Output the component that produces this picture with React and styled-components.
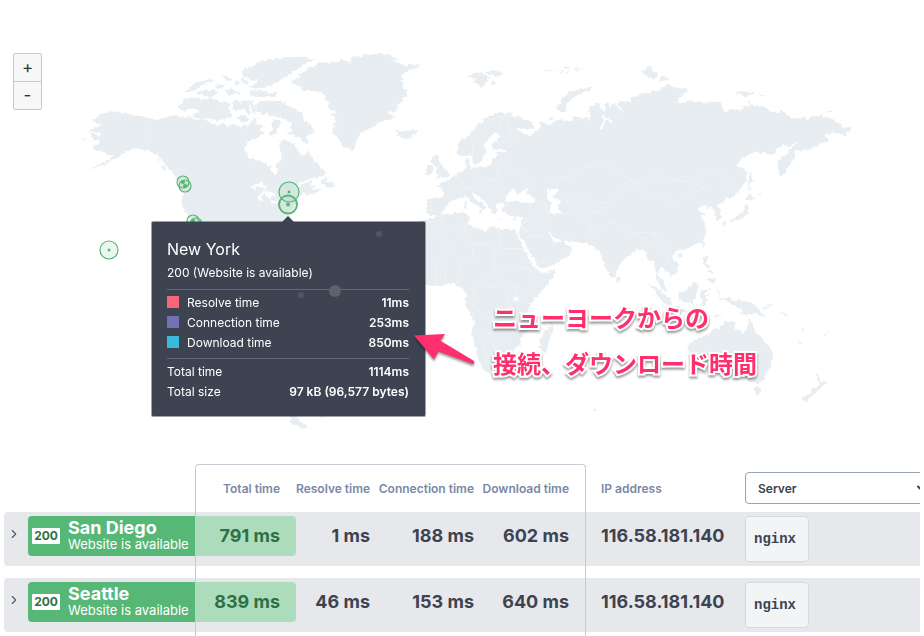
import React, { useState } from 'react';
import styled, { createGlobalStyle } from 'styled-components';
import { ChevronDown, ChevronRight } from 'lucide-react';

const GlobalStyle = createGlobalStyle`
  * {
    box-sizing: border-box;
  }
  body {
    margin: 0;
    background: #fff;
    color: #3d4351;
    font-family: Inter, "Noto Sans CJK JP", sans-serif;
    font-size: 12px;
  }
`;

const Page = styled.main`
  padding: 0 4px;
`;

const MapPanel = styled.section`
  position: relative;
  margin: 0 -4px;
`;

const MapSvg = styled.svg`
  display: block;
  width: 100%;
  height: auto;
`;

const ZoomControls = styled.div`
  position: absolute;
  top: 53px;
  left: 13px;
  display: flex;
  flex-direction: column;
  width: 29px;
  border: 1px solid #c8c8c8;
  border-radius: 2px;
  background: #f7f7f7;
`;

const ZoomButton = styled.button`
  height: 27px;
  padding: 0;
  border: 0;
  background: none;
  color: #333;
  font: 400 17px/27px Inter, sans-serif;
  cursor: pointer;

  & + & {
    height: 28px;
    border-top: 1px solid #c8c8c8;
  }
`;

const Tooltip = styled.div`
  position: absolute;
  top: 222px;
  left: 152px;
  width: 273px;
  padding: 15px 16px 9px 15px;
  border-radius: 1px;
  background: #3d4351;
  color: #fff;
  box-shadow: 0 0 0 1px rgba(61, 67, 81, 0.5);

  &::before {
    content: '';
    position: absolute;
    top: -6px;
    left: 130px;
    border: 6px solid transparent;
    border-top: 0;
    border-bottom-color: #3d4351;
  }
`;

const TooltipDots = styled.svg`
  position: absolute;
  inset: 0;
  width: 100%;
  height: 100%;
`;

const TooltipTitle = styled.h2`
  margin: 0;
  font-size: 16px;
  font-weight: 400;
  line-height: 25px;
`;

const TooltipStatus = styled.p`
  margin: 0;
  padding-bottom: 5px;
  font-size: 12px;
  line-height: 22px;
`;

const Metrics = styled.dl`
  margin: 0;
  padding: 2px 0 6px;
  border-top: 1px solid #606a78;
`;

const Metric = styled.div`
  display: flex;
  align-items: center;
  height: 20px;

  dt {
    flex: 1;
  }
  dd {
    margin: 0;
    font-weight: 600;
  }
`;

const Swatch = styled.span`
  width: 12px;
  height: 12px;
  margin-right: 8px;
  background: ${(props) => props.$color};
`;

const Arrow = styled.svg`
  position: absolute;
  top: 326px;
  left: 408px;
  width: 72px;
  height: 46px;
  filter: drop-shadow(0 2px 1px rgba(0, 0, 0, 0.4));
`;

const Note = styled.p`
  position: absolute;
  top: 294px;
  left: 493px;
  margin: 0;
  color: #ff2e6c;
  font: 700 24px/46px "Noto Sans CJK JP", sans-serif;
  white-space: nowrap;
  paint-order: stroke fill;
  -webkit-text-stroke: 4px #fff;
  filter: drop-shadow(0 2px 1px rgba(0, 0, 0, 0.4));
`;

const Results = styled.section`
  position: relative;
  overflow: hidden;
`;

const TimingFrame = styled.div`
  position: absolute;
  top: 0;
  bottom: 0;
  left: 191px;
  width: 391px;
  border: 1px solid #c5cad4;
  border-bottom: 0;
  border-radius: 4px 4px 0 0;
  pointer-events: none;
`;

const Table = styled.table`
  width: 100%;
  table-layout: fixed;
  border-collapse: separate;
  border-spacing: 0;
`;

const Col = styled.col`
  width: ${(props) => props.$width};
`;

const Head = styled.th`
  height: 48px;
  padding: 0 ${(props) => props.$right || '0'} 0 ${(props) => props.$left || '0'};
  color: #7b88a3;
  font-size: 12px;
  font-weight: 600;
  text-align: ${(props) => props.$align || 'right'};
  white-space: nowrap;
`;

const Group = styled.tbody`
  &::after {
    content: '';
    display: table-row;
    height: 12px;
  }
`;

const Cell = styled.td`
  height: 54px;
  padding: 4px 0;
  background: #e7e8ec;
  vertical-align: top;

  &:first-child {
    border-radius: 4px 0 0 4px;
  }
`;

const Expand = styled.button`
  display: flex;
  align-items: center;
  justify-content: center;
  width: 20px;
  height: 36px;
  padding: 0;
  border: 0;
  background: none;
  color: #555b68;
  cursor: pointer;
`;

const Location = styled.div`
  display: flex;
  align-items: center;
  gap: 8px;
  height: 40px;
  padding-left: 4px;
  border-radius: 4px 0 0 4px;
  background: #57b777;
  color: #fff;
  white-space: nowrap;
`;

const Code = styled.span`
  width: 28px;
  border-radius: 1px;
  background: #fff;
  color: #2d7045;
  font-size: 12px;
  font-weight: 700;
  line-height: 16px;
  text-align: center;
`;

const Place = styled.div`
  padding-bottom: 3px;
`;

const City = styled.div`
  font-size: 18px;
  font-weight: 700;
  line-height: 20px;
`;

const Status = styled.div`
  font-size: 13px;
  line-height: 13px;
`;

const Value = styled.div`
  height: 40px;
  padding: 0 ${(props) => props.$right || '8px'} 0 ${(props) => props.$left || '0'};
  border-radius: 0 4px 4px 0;
  background: ${(props) => (props.$total ? '#addcbd' : 'none')};
  color: ${(props) => (props.$total ? '#2d7045' : '#3d4351')};
  font-size: 18px;
  font-weight: 700;
  line-height: 40px;
  text-align: ${(props) => props.$align || 'right'};
  white-space: nowrap;
`;

const ServerValue = styled.code`
  display: inline-block;
  padding: 0 12px 0 8px;
  border: 1px solid #d6d8dc;
  border-radius: 4px;
  background: #f3f4f6;
  color: #3d4351;
  font: 700 14px/44px "Liberation Mono", monospace;
  vertical-align: top;
`;

const SelectBox = styled.label`
  position: relative;
  display: block;
  width: 190px;

  svg {
    position: absolute;
    top: 10px;
    right: 8px;
    color: #3d4351;
    pointer-events: none;
  }
`;

const Select = styled.select`
  display: block;
  width: 100%;
  height: 32px;
  padding: 0 12px;
  border: 1px solid #98a3b3;
  border-radius: 4px;
  background: #fff;
  color: #3d4351;
  font: 600 12px Inter, sans-serif;
  appearance: none;
`;

// Land outlines are stored at three units per map pixel, grouped by origin.
const land = [
  {
    x: 0,
    y: 40,
    paths: [
      'M265 273L288 260L306 255L290 249L274 241L292 230L300 223L320 219L338 213L358 218L378 217L400 226L440 232L468 240L500 232L522 225L545 233L562 228L590 240L606 238L620 242L632 250L655 258L674 248L682 262L700 254L722 262L735 254L742 264L752 245L762 232L774 240L764 250L780 258L793 256L781 270L794 279L774 292L757 297L740 309L733 330L745 350L762 359L786 362L802 374L812 378L815 392L828 408L833 390L826 376L843 362L848 345L839 327L842 305L856 299L872 307L885 312L892 330L906 347L918 341L925 332L932 350L944 363L962 380L982 399L968 408L945 414L920 419L897 430L884 444L901 438L922 424L936 422L928 437L950 440L931 449L960 443L953 456L922 467L916 459L901 468L890 472L893 483L877 506L866 516L873 530L857 545L840 565H600L580 540L562 525L548 501L545 482L550 447L535 430L525 410L519 397L502 380L491 367L478 350L462 340L440 331L407 325L394 326L380 334L365 345L343 358L314 374L272 389L258 396L286 380L320 365L343 345L326 347L305 333L289 332L278 325L291 312L303 304L282 299L268 280L288 283L301 288L297 278Z',
      'M552 178L570 174L592 173L617 178L635 172L652 181L668 195L690 211L697 229L675 239L646 240L625 235L605 238L592 232L577 229L580 220L600 217L590 207L570 209L549 213L534 205L542 196Z',
      'M552 154L570 143L580 130L602 124L634 117L637 125L610 133L596 143L579 150L565 157ZM592 157L618 148L624 154L645 151L655 163L637 169L600 166ZM666 108L686 110L697 120L682 124ZM639 136L660 132L674 140L655 145ZM673 148L696 145L703 160L687 168ZM698 126L715 122L717 132L705 135ZM704 151L720 154L724 165L706 160ZM661 192L676 184L690 189L688 205L673 208ZM700 186L712 180L722 192L724 208L708 214L698 202ZM727 178L753 183L748 200L755 219L742 225L733 207L720 206ZM753 183L761 178L760 190L768 210L761 225L754 207ZM712 232L735 224L751 238L738 247L724 245ZM484 380L490 378L502 392L496 394ZM470 352L476 354L484 368L478 364Z',
      'M765 194L778 184L810 182L842 183L852 190L872 200L895 212L909 223L906 239L924 252L948 270L939 273L944 282L926 281L920 294L926 312L910 305L899 295L887 293L874 283L858 283L868 276L881 274L873 263L876 250L858 240L838 228L820 231L802 222L784 226L778 217L767 207Z',
      'M818 240L836 240L842 252L832 264L826 284L811 288L802 278L821 270L815 257Z',
      'M724 96L736 85L754 80L774 67L800 61L833 57L872 52L901 50L928 56L948 62L927 66L910 76L894 86L881 92L869 105L850 115L832 126L812 137L786 145L760 146L747 138L766 132L778 121L757 122L740 113L726 107ZM747 153L766 149L784 152L804 158L829 155L831 166L809 171L775 170L752 168ZM721 115L740 118L751 127L733 133Z',
      'M960 430L969 420L976 408L981 414L978 425L992 427L1002 433L1000 444L991 440L980 442ZM243 295L257 297L255 302Z'
    ]
  },
  {
    x: 220,
    y: 40,
    paths: [
      'M213 122L240 113L237 103L258 96L260 86L286 77L292 68L318 65L348 70L367 60L392 65L390 55L430 46L468 42L505 44L538 54L527 61L507 66L542 69L552 79L572 74L602 73L595 81L579 86L559 97L545 108L557 119L540 122L555 134L545 144L559 151L562 168L543 177L550 187L527 194L540 202L531 209L501 220L531 230L510 239L489 243L466 252L452 267L426 276L418 287L410 300L402 329L395 333L386 325L372 322L358 304L350 290L338 276L337 266L350 259L334 256L350 247L340 240L352 235L329 226L348 220L345 209L327 206L326 188L316 179L315 165L300 155L275 153L243 153L248 143L219 130Z',
      'M525 273L536 267L544 275L555 273L572 267L583 270L592 280L578 288L557 298L535 291L542 286L528 284L540 279Z'
    ]
  },
  {
    x: 420,
    y: 40,
    paths: [
      'M111 315L125 300L140 291L153 277L166 265L174 248L187 246L192 236L208 230L224 222L246 215L257 221L275 219L274 227L300 232L325 242L341 253L342 264L325 270L308 267L288 263L300 274L306 281L333 285L347 272L360 268L357 244L372 246L377 258L405 246L425 238L444 244L463 241L455 228L480 235L501 235L516 244L507 230L511 221L504 207L514 195L528 188L541 194L539 207L553 217L546 232L553 243L535 269L552 261L556 239L576 246L570 236L554 235L552 218L559 210L552 195L563 185L568 200L583 192L596 208L612 221L608 207L590 193L596 183L628 184L632 174L660 164L690 155L723 148L730 139L744 131L760 142L800 146L803 158L779 168L777 178L762 188L790 185L830 184L859 192L868 184L900 187L904 204L917 218L928 208L970 210L971 197L996 196L1034 201L1055 215L1097 216L1105 232L1153 233L1160 240L1169 240L1173 227L1209 228L1238 237L1261 252L1268 263L1287 262L1292 270L1280 276L1274 289L1256 279L1235 274L1231 282L1210 284L1222 290L1226 304L1204 310L1166 329L1127 332L1122 342L1121 364L1108 371L1102 390L1080 412L1075 394L1073 366L1087 352L1122 319L1130 306L1114 315L1104 325L1102 313L1089 314L1069 328L1068 337L1045 342L1010 337L990 340L967 358L946 377L969 385L980 393L979 420L966 441L945 466L926 478L919 470L908 487L889 496L903 513L906 532L890 541L884 519L875 500L856 506L859 493L846 500L831 511L858 520L842 529L856 551L858 579L848 604L819 619L794 630L775 629L763 637L756 652L776 675L777 695L752 712L744 698L724 680L714 688L715 709L730 724L741 756L724 746L708 715L708 690L698 661L685 665L677 637L667 625L645 633L620 654L593 680L590 705L575 718L560 687L545 654L541 632L527 632L514 615L481 606L442 605L415 596L398 588L386 570L389 585L403 605L412 610L427 600L440 615L459 625L444 648L401 674L360 688L345 662L321 622L295 580L301 561L307 529L286 531L267 526L247 517L246 501L264 491L233 490L227 499L231 519L218 524L211 504L194 486L172 466L158 456L160 471L188 491L199 498L187 510L176 498L154 486L142 468L120 473L91 484L73 506L60 526L36 529L20 520L22 473L70 473L69 448L48 434L78 426L107 407L121 393L141 385L136 366L145 354L151 371L154 384L180 380L212 378L216 356L234 346L225 336L253 336L264 329L217 329L215 311L235 294L239 280L216 282L207 298L190 316L198 332L189 348L184 366L170 375L159 368L156 349L143 347L121 349L111 338Z',
      'M34 351L47 344L58 347L55 362L68 375L73 389L88 399L85 412L66 411L46 416L57 406L49 398L53 385L43 376L35 367ZM14 387L24 375L39 376L39 400L16 408L22 397ZM133 483L139 481L137 494L140 506L132 505ZM176 513L187 511L184 518ZM227 534L249 535L236 538ZM275 535L293 530L284 539Z',
      'M148 103L176 99L183 96L202 108L215 111L202 117L194 135L181 144L177 133L156 124L174 117L148 113ZM196 97L220 92L250 96L248 102L227 109ZM211 124L222 121L232 132L217 135ZM368 87L383 91L402 89L400 94L378 93ZM414 93L429 92L429 96ZM428 85L447 74L451 84L439 87ZM458 88L474 83L470 92ZM475 87L495 82L482 89ZM433 94L453 96L443 98Z',
      'M409 210L418 194L426 177L447 156L476 149L514 141L517 149L475 162L458 176L441 190L436 203L444 215L429 217ZM386 236L399 235L397 242L386 240ZM665 98L680 82L698 82L699 95L716 99L714 113L699 116L681 107ZM714 124L728 108L753 119L735 121ZM945 159L965 152L982 157L1005 159L991 165L969 171L958 162ZM1012 162L1042 166L1025 168ZM975 182L993 184L989 189ZM1221 214L1237 209L1243 214L1224 217Z',
      'M983 391L993 395L998 426L990 428L992 446L986 448L984 423L989 417ZM985 460L1001 470L1007 473L991 483L977 478L983 470ZM976 494L985 492L983 515L972 527L958 538L939 545L927 543L954 530L969 516ZM908 547L919 547L918 560L910 561ZM925 542L937 540L934 547ZM1011 466L1028 459L1018 467Z',
      'M0 544L34 536L60 524L100 520L139 519L150 535L145 551L183 572L198 572L206 558L245 566L270 570L286 568L301 606L319 641L339 674L355 691L362 700L406 691L397 714L374 745L344 774L329 797L325 815L335 837L333 865L302 894L302 915L281 926L264 958L240 982L211 996L197 1000L174 956L168 925L154 882L162 845L152 826L138 800L134 778L139 766L130 745L111 739L101 730L62 735L28 739L0 728Z',
      'M397 844L400 862L389 904L377 935L365 937L356 924L362 909L358 899L375 876L386 867ZM589 707L601 717L597 730L590 727ZM780 642L787 637L787 647L779 653L773 647ZM848 607L856 605L850 626L845 618ZM850 651L862 650L860 671L873 684L862 683L847 671ZM858 692L868 696L874 689L881 700L873 702ZM859 718L884 710L888 719L882 731L870 727Z'
    ]
  },
  {
    x: 630,
    y: 200,
    paths: [
      'M56 252L79 262L94 275L106 285L121 300L127 317L112 318L92 300L80 280ZM128 320L147 321L171 330L199 339L236 347L208 346L174 340L137 332ZM145 278L165 274L190 249L197 246L209 260L200 273L200 286L185 312L162 304L148 301ZM211 273L220 269L247 267L220 280L221 287L238 283L230 290L235 306L226 302L221 322L213 322L217 302L211 298ZM252 345L281 342L260 352Z',
      'M281 291L297 292L308 304L330 298L364 307L381 318L390 335L412 351L394 350L371 337L363 345L348 346L332 339L335 326L313 319L297 309L286 304ZM397 322L417 315L423 309L425 317L404 327ZM449 337L473 346L475 351L456 342ZM514 380L523 387L522 396ZM498 419L516 431L511 433ZM580 404L590 399L585 406ZM589 399L596 394L593 400ZM261 268L270 276L265 286ZM266 292L285 294L275 299Z',
      'M174 432L207 414L223 408L242 398L248 387L268 385L286 365L319 366L310 380L344 402L352 380L358 353L369 374L371 394L388 404L406 428L423 444L430 471L420 501L407 525L404 539L382 549L343 540L334 523L319 516L310 500L270 503L243 518L199 522L184 514L190 491L177 465Z',
      'M372 562L397 564L395 574L385 586L377 582ZM555 520L566 528L572 542L589 545L579 558L566 570L558 564L568 550L563 533ZM552 562L561 568L558 579L536 595L530 607L514 602L521 591L542 577Z'
    ]
  },
  { x: 145, y: 170, paths: ['M430 735L448 733L468 755L490 772L474 776L449 763L431 757L438 748ZM521 739L535 738L529 742Z'] },
  { x: 420, y: 200, paths: ['M518 627L528 627L527 633L518 632Z'] }
];

const water = [
  { x: 0, y: 40, d: 'M748 443L768 432L787 430L800 438L797 447L778 440L763 447ZM779 458L790 454L796 456L785 467L787 481L780 485L776 474ZM795 453L808 455L821 456L827 466L814 468L806 478L799 465ZM812 486L840 477L832 489L815 491ZM838 472L856 466L850 476Z' },
  { x: 420, y: 40, d: 'M258 486L259 469L272 450L288 450L289 461L309 459L302 451L327 444L319 457L340 472L346 486L324 490L300 482L278 484ZM378 457L391 446L416 447L413 459L398 467L409 479L419 479L421 491L415 501L422 522L399 521L389 513L395 491L382 476ZM456 458L462 455L461 464ZM281 773L292 767L297 775L286 785Z' }
];

const borders = [
  'M157 352L158 318L166 301L188 267L214 237L246 229L276 225M238 282L240 250L246 231M275 226L265 244L278 308L263 327M250 338L257 356L267 371L276 394L308 410L334 426L329 446M231 368L252 376L276 394M172 382L177 415L218 423L232 404L230 374M119 398L119 421L130 437L159 441L177 416M131 444L157 447L190 443L215 434M190 448L204 472L226 478L241 476M217 423L234 424L250 443L263 448M78 425L98 435L121 442L116 466M22 485L36 488L32 524M376 434L389 415L427 412L462 407L475 388L515 378L550 377L579 386L613 410L642 426L616 431L605 444L589 469L580 483L550 489L518 487L491 474L461 469L438 483L438 463',
  'M641 427L672 419L706 404L740 417L780 423L823 423L846 428L834 438L855 443L823 456L778 480L746 485L704 466L670 457L642 427M823 423L846 392L876 390L913 412L937 433L914 466L890 489',
  'M345 486L370 491L390 500M371 488L383 523L398 531M301 560L331 526L366 520L384 543L398 578M423 524L452 515L492 530L512 554L510 592M461 480L478 505L494 523L534 516L552 512L580 550M518 489L538 500L556 516M580 543L611 570L643 580L675 577L705 580L700 612L728 619L754 628M510 607L536 577L560 552L581 549M640 584L669 596L680 588M679 593L685 620M698 577L711 594L724 620L737 630L753 681',
  'M21 547L61 540L65 552L28 587L0 609M60 524L75 555L130 586L143 538M130 545L139 584L158 611L223 616L225 680L198 718L163 745L138 748M237 565L240 625L340 626M158 611L157 652L124 670L110 733M38 571L98 625L72 656L44 684L47 735M224 680L270 690L321 680L362 724L328 760L289 737L257 730L224 681M163 745L161 805L215 834L216 878L176 885M203 744L253 737L267 768L265 816L216 831M289 738L292 766L330 789M267 787L290 827L328 821M216 878L252 868L276 879L293 852L281 832M173 885L195 925L201 973M202 905L230 920L267 893M227 918L234 943L262 954M45 679L75 683L77 733M302 650L332 669L350 693M381 691L398 711L362 725M445 595L460 620L415 659L361 671M386 594L342 586L301 563M302 562L326 570L347 542L387 567M320 572L319 593L345 587'
];

const pins = [
  { x: 183, y: 182, r: 6, dot: 2 },
  { x: 185, y: 186, r: 6, dot: 2 },
  { x: 193, y: 221, r: 6, dot: 2 },
  { x: 196, y: 224, r: 6, dot: 2 },
  { x: 289, y: 192, r: 10, dot: 1.5 },
  { x: 109, y: 250, r: 9, dot: 1.5 },
  { x: 288, y: 204.5, r: 9, dot: 2, active: true }
];

const metrics = [
  { label: 'Resolve time', value: '11ms', color: '#f56777' },
  { label: 'Connection time', value: '253ms', color: '#7272b8' },
  { label: 'Download time', value: '850ms', color: '#39bad8' }
];

const totals = [
  { label: 'Total time', value: '1114ms' },
  { label: 'Total size', value: '97 kB (96,577 bytes)' }
];

const results = [
  { city: 'San Diego', total: 791, resolve: 1, connection: 188, download: 602 },
  { city: 'Seattle', total: 839, resolve: 46, connection: 153, download: 640 }
];

const place = (x, y) => `translate(${x} ${y}) scale(0.33333)`;

const WorldMap = () => (
  <MapSvg viewBox="0 0 924 464" role="img" aria-label="World map">
    <defs>
      <filter id="coast" x="0" y="0" width="924" height="464" filterUnits="userSpaceOnUse">
        <feTurbulence type="fractalNoise" baseFrequency="0.25" numOctaves="2" seed="4" />
        <feDisplacementMap in="SourceGraphic" scale="5" xChannelSelector="R" yChannelSelector="G" />
      </filter>
    </defs>
    <g filter="url(#coast)" colorInterpolationFilters="sRGB">
      {land.map((group) => (
        <g key={`${group.x}-${group.y}`} transform={place(group.x, group.y)} fill="#e8edf1">
          {group.paths.map((d) => <path key={d} d={d} />)}
        </g>
      ))}
      {water.map((w) => <path key={w.d} d={w.d} transform={place(w.x, w.y)} fill="#fff" />)}
    </g>
    {borders.map((d) => (
      <path
        key={d}
        d={d}
        transform={place(420, 40)}
        fill="none"
        stroke="#f1f4f6"
        strokeWidth="2"
        strokeLinejoin="round"
      />
    ))}
    <path d="M146 117V150M746 300V315" stroke="#f1f4f6" strokeWidth="0.7" />
    {pins.map((pin) => (
      <g key={`${pin.x}-${pin.y}`}>
        <circle
          cx={pin.x}
          cy={pin.y}
          r={pin.r}
          fill="#57b777"
          fillOpacity="0.12"
          stroke="#57b777"
          strokeWidth={pin.active ? 2 : 1.2}
        />
        <circle cx={pin.x} cy={pin.y} r={pin.dot} fill="#57b777" />
      </g>
    ))}
  </MapSvg>
);

const MetricRow = ({ metric }) => (
  <Metric>
    {metric.color && <Swatch $color={metric.color} />}
    <dt>{metric.label}</dt>
    <dd>{metric.value}</dd>
  </Metric>
);

const ResultRow = ({ result }) => {
  const [open, setOpen] = useState(false);
  return (
    <Group>
      <tr>
        <Cell>
          <Expand aria-label={`Show ${result.city}`} aria-expanded={open} onClick={() => setOpen(!open)}>
            <ChevronRight size={14} />
          </Expand>
        </Cell>
        <Cell>
          <Location>
            <Code>200</Code>
            <Place>
              <City>{result.city}</City>
              <Status>Website is available</Status>
            </Place>
          </Location>
        </Cell>
        <Cell><Value $total $right="16px">{result.total} ms</Value></Cell>
        <Cell><Value>{result.resolve} ms</Value></Cell>
        <Cell><Value>{result.connection} ms</Value></Cell>
        <Cell><Value $right="16px">{result.download} ms</Value></Cell>
        <Cell><Value $align="left" $left="16px">116.58.181.140</Value></Cell>
        <Cell><ServerValue>nginx</ServerValue></Cell>
      </tr>
    </Group>
  );
};

const App = () => (
  <Page>
    <GlobalStyle />
    <MapPanel>
      <WorldMap />
      <ZoomControls>
        <ZoomButton aria-label="Zoom in">+</ZoomButton>
        <ZoomButton aria-label="Zoom out">-</ZoomButton>
      </ZoomControls>
      <Tooltip>
        <TooltipDots aria-hidden="true">
          <circle cx="227" cy="12" r="3" fill="#505663" />
          <circle cx="183" cy="69" r="6" fill="#5c626e" />
          <circle cx="149" cy="73" r="3" fill="#505663" />
        </TooltipDots>
        <TooltipTitle>New York</TooltipTitle>
        <TooltipStatus>200 (Website is available)</TooltipStatus>
        <Metrics>
          {metrics.map((metric) => <MetricRow key={metric.label} metric={metric} />)}
        </Metrics>
        <Metrics>
          {totals.map((metric) => <MetricRow key={metric.label} metric={metric} />)}
        </Metrics>
      </Tooltip>
      <Arrow viewBox="408 326 72 46" aria-hidden="true">
        <path d="M414 335.6L445 334L440.5 340.8L474 361Q475 364 472.5 364L438.5 351.6L434 359.5Z" fill="#ff2e6c" />
      </Arrow>
      <Note>
        ニューヨークからの
        <br />
        接続、ダウンロード時間
      </Note>
    </MapPanel>
    <Results>
      <Table>
        <colgroup>
          <Col $width="24px" />
          <Col $width="167px" />
          <Col $width="101px" />
          <Col $width="82px" />
          <Col $width="104px" />
          <Col $width="103px" />
          <Col $width="160px" />
          <Col />
        </colgroup>
        <thead>
          <tr>
            <Head colSpan={2} />
            <Head $right="16px">Total time</Head>
            <Head $right="8px">Resolve time</Head>
            <Head $right="8px">Connection time</Head>
            <Head $right="16px">Download time</Head>
            <Head $align="left" $left="16px">IP address</Head>
            <Head $align="left">
              <SelectBox>
                <Select aria-label="Response header" defaultValue="Server">
                  <option>Server</option>
                </Select>
                <ChevronDown size={12} strokeWidth={4} />
              </SelectBox>
            </Head>
          </tr>
        </thead>
        {results.map((result) => <ResultRow key={result.city} result={result} />)}
      </Table>
      <TimingFrame />
    </Results>
  </Page>
);

export default App;
